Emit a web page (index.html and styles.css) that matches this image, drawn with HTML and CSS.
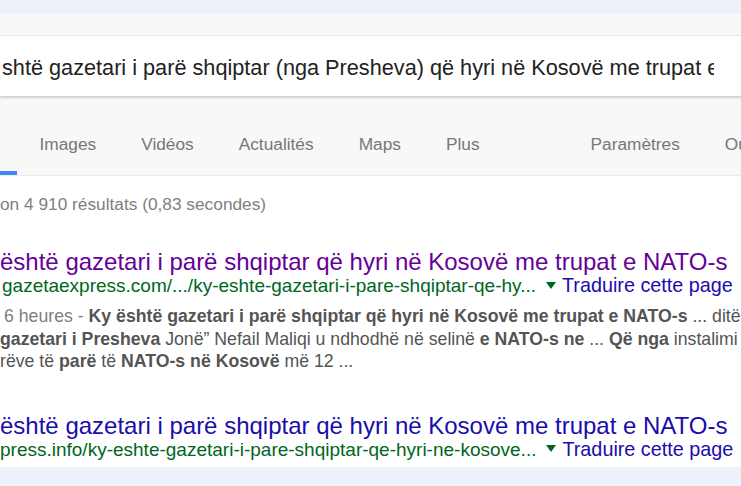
FILE: index.html
```html
<!DOCTYPE html>
<html lang="fr">
<head>
    <meta charset="UTF-8">
    <meta name="viewport" content="width=device-width, initial-scale=1.0">
    <title>Recherche</title>
    <link rel="stylesheet" href="styles.css">
</head>
<body>
<div class="top-band"></div>

<!-- Search field -->
<div class="search-area">
    <div class="search-box">
        <span class="query">shtë gazetari i parë shqiptar (nga Presheva) që hyri në Kosovë me trupat e NATO-s</span>
    </div>
</div>

<!-- Tabs -->
<div class="tabs">
    <span class="tab active"></span>
    <span class="tab">Images</span>
    <span class="tab">Vidéos</span>
    <span class="tab">Actualités</span>
    <span class="tab">Maps</span>
    <span class="tab">Plus</span>
    <span class="tab settings">Paramètres</span>
    <span class="tab">Outils</span>
</div>

<div class="stats">on 4 910 résultats (0,83 secondes)</div>

<!-- Results -->
<div class="result visited">
    <a class="title" href="#">është gazetari i parë shqiptar që hyri në Kosovë me trupat e NATO-s</a>
    <div class="url">
        <cite>gazetaexpress.com/.../ky-eshte-gazetari-i-pare-shqiptar-qe-hy...</cite><span class="arrow"></span><a class="translate" href="#">Traduire cette page</a>
    </div>
    <div class="snippet">
        <span class="date">6 heures - </span><b>Ky është gazetari i parë shqiptar që hyri në Kosovë me trupat e NATO-s</b> ... ditë<br>
        <b>gazetari i Presheva</b> Jonë” Nefail Maliqi u ndhodhë në selinë <b>e NATO-s ne</b> ... <b>Që nga</b> instalimi<br>
        rëve të <b>parë</b> të <b>NATO-s në Kosovë</b> më 12 ...
    </div>
</div>

<div class="result second">
    <a class="title" href="#">është gazetari i parë shqiptar që hyri në Kosovë me trupat e NATO-s</a>
    <div class="url">
        <cite>press.info/ky-eshte-gazetari-i-pare-shqiptar-qe-hyri-ne-kosove...</cite><span class="arrow"></span><a class="translate" href="#">Traduire cette page</a>
    </div>
</div>

<div class="bottom-band"></div>
</body>
</html>
```

FILE: styles.css
```css
/* Page */
body {
    margin: 0;
    width: 741px;
    height: 486px;
    overflow: hidden;
    background-color: #fff;
    font-family: "Liberation Sans", Arial, sans-serif;
}

.top-band {
    height: 14px;
    background-color: #edf2fa;
}

/* Search field */
.search-area {
    padding-top: 21px;
    background-color: #f8f8f8;
}

.search-box {
    position: relative;
    z-index: 1;
    height: 61px;
    box-sizing: border-box;
    padding: 4px 0 0 2px;
    border-top: 1px solid #e8e8e8;
    background-color: #fff;
    box-shadow: 0 2px 2px rgba(0, 0, 0, 0.16);
}

.query {
    display: block;
    width: 712px;
    overflow: hidden;
    white-space: nowrap;
    font-size: 21.7px;
    line-height: 56px;
    color: #222;
}

/* Tabs */
.tabs {
    display: flex;
    align-items: flex-end;
    height: 79px;
    background-color: #f8f8f8;
    border-bottom: 1px solid #ebebeb;
    font-size: 17.3px;
    color: #777;
    white-space: nowrap;
}

.tab {
    flex-shrink: 0;
    padding: 0 22.5px 17px;
    line-height: 20px;
    border-bottom: 4px solid transparent;
}

.tab.active {
    width: 17px;
    height: 41px;
    box-sizing: border-box;
    padding: 0;
    border-bottom-color: #4285f4;
}

.tab.settings {
    margin-left: 66px;
}

.stats {
    margin-top: 18px;
    font-size: 17.3px;
    line-height: 20px;
    color: #808080;
    white-space: nowrap;
}

/* Results */
.result {
    margin-top: 36px;
    white-space: nowrap;
}

.result.second {
    margin-top: 41px;
}

.result .title {
    display: block;
    font-size: 24px;
    line-height: 23px;
    color: #1a0dab;
    text-decoration: none;
}

.result.visited .title {
    color: #609;
}

.url {
    font-size: 19px;
    line-height: 24px;
}

.url cite {
    font-style: normal;
    color: #006621;
}

.result.visited cite {
    padding-left: 2px;
}

.arrow {
    display: inline-block;
    margin: 0 6px 3px 10px;
    border-left: 5px solid transparent;
    border-right: 5px solid transparent;
    border-top: 7px solid #006621;
    vertical-align: middle;
}

.translate {
    font-size: 19.8px;
    color: #1a0dab;
    text-decoration: none;
}

.snippet {
    margin-top: 7px;
    font-size: 17.7px;
    line-height: 22.5px;
    color: #545454;
}

.snippet .date {
    margin-left: 4px;
    color: #808080;
}

.bottom-band {
    height: 30px;
    margin-top: 5px;
    background-color: #edf2fa;
}
```
